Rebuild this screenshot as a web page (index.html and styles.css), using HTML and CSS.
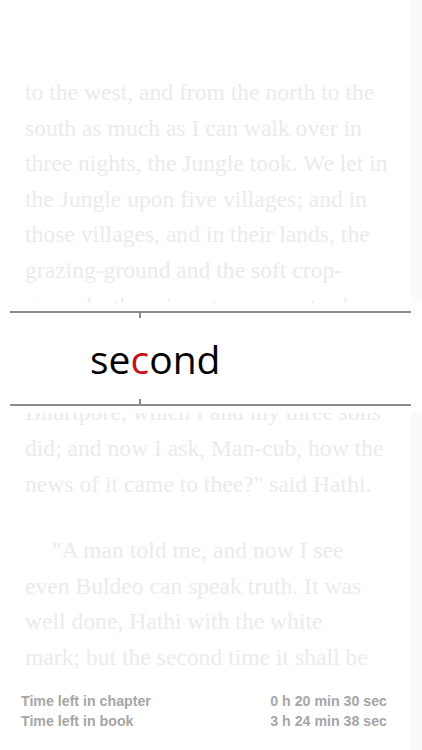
FILE: index.html
```html
<!DOCTYPE html>
<html lang="en">
<head>
<meta charset="utf-8">
<title>Reader</title>
<link rel="stylesheet" href="styles.css">
</head>
<body>
<div class="page">
  <div class="reader">
    <div class="text">
      <p class="para">
        <span class="ln">to the west, and from the north to the</span>
        <span class="ln">south as much as I can walk over in</span>
        <span class="ln">three nights, the Jungle took. We let in</span>
        <span class="ln">the Jungle upon five villages; and in</span>
        <span class="ln">those villages, and in their lands, the</span>
        <span class="ln">grazing-ground and the soft crop-</span>
        <span class="ln">grounds, there is not one man to-day</span>
        <span class="ln covered">that gets his food from the ground. That</span>
        <span class="ln covered">was the clearing of the fields of</span>
        <span class="ln">Bhurtpore, which I and my three sons</span>
        <span class="ln">did; and now I ask, Man-cub, how the</span>
        <span class="ln">news of it came to thee?" said Hathi.</span>
      </p>
      <p class="para second-para">
        <span class="ln indent">"A man told me, and now I see</span>
        <span class="ln">even Buldeo can speak truth. It was</span>
        <span class="ln">well done, Hathi with the white</span>
        <span class="ln">mark; but the second time it shall be</span>
      </p>
    </div>
    <div class="stats">
      <div class="stat-row"><span>Time left in chapter</span><span>0 h 20 min 30 sec</span></div>
      <div class="stat-row"><span>Time left in book</span><span>3 h 24 min 38 sec</span></div>
    </div>
  </div>
  <div class="edge"></div>
  <div class="focus">
    <div class="rule rule-top"></div>
    <div class="word">se<span class="orp">c</span>ond</div>
    <div class="rule rule-bottom"></div>
  </div>
</div>
</body>
</html>
```
FILE: styles.css
```css
html, body {
  margin: 0;
  padding: 0;
  background: #ffffff;
}
.page {
  position: relative;
  width: 422px;
  height: 750px;
  display: flex;
  overflow: hidden;
}
.reader {
  width: 411px;
  height: 750px;
  display: flex;
  flex-direction: column;
  background: #ffffff;
}
.edge {
  flex: 1;
  background: #fbf9f9;
}
.text {
  height: 607px;
  padding: 75px 0 0 25px;
  overflow: hidden;
  font-family: "Liberation Serif", "DejaVu Serif", serif;
  font-size: 23.6px;
  line-height: 35.6px;
  color: #ebebeb;
}
.para {
  margin: 0;
}
.second-para {
  margin-top: 31px;
}
.ln {
  display: block;
  white-space: nowrap;
}
.covered {
  visibility: hidden;
}
.indent {
  text-indent: 27px;
}
.stats {
  padding: 9px 24px 0 21px;
  font-family: "Liberation Sans", Arial, sans-serif;
  font-weight: bold;
  font-size: 14.2px;
  line-height: 20px;
  color: #a6a6a6;
}
.stat-row {
  display: flex;
  justify-content: space-between;
}
.focus {
  position: absolute;
  left: 0;
  top: 303px;
  width: 422px;
  height: 110px;
  background: #ffffff;
  padding-top: 8px;
  box-sizing: border-box;
}
.rule {
  position: relative;
  margin-left: 10px;
  width: 401px;
  height: 2px;
  background: #8a8a8a;
}
.rule-top::after,
.rule-bottom::after {
  content: "";
  position: absolute;
  left: 129px;
  width: 2px;
  height: 7px;
  background: #8a8a8a;
}
.rule-top::after {
  top: 0;
}
.rule-bottom::after {
  bottom: 0;
}
.word {
  margin: 19px 0 18px 90px;
  font-family: "Open Sans", "Noto Sans", sans-serif;
  font-size: 39px;
  line-height: 54px;
  color: #000000;
}
.orp {
  color: #c8101c;
}
```
